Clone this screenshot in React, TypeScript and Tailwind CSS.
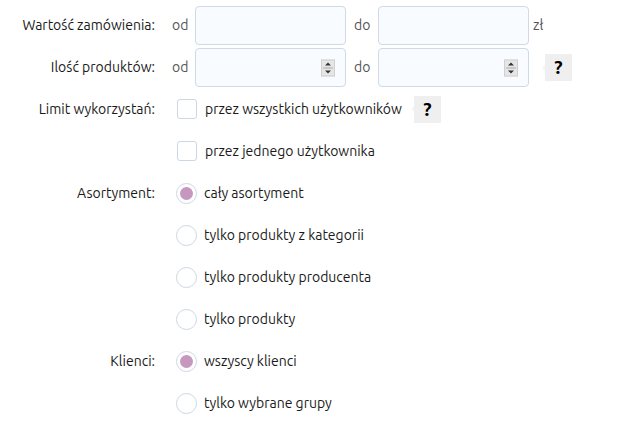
import React from "react";

const font = { fontFamily: "Ubuntu, 'Noto Sans', 'Open Sans', sans-serif" };

function Spinner() {
  return (
    <div className="absolute right-[10px] top-1/2 -translate-y-1/2 w-[14px] h-[17px] bg-[#e6e6e6] border border-[#cfcfcf] flex flex-col items-center justify-center gap-[1px]">
      <svg width="8" height="5" viewBox="0 0 8 5"><path d="M4 1 L7 4 L1 4 Z" fill="#333" /></svg>
      <div className="w-[10px] h-px bg-[#aaa]" />
      <svg width="8" height="5" viewBox="0 0 8 5"><path d="M1 1 L7 1 L4 4 Z" fill="#333" /></svg>
    </div>
  );
}

function Input({ spinner }: { spinner?: boolean }) {
  return (
    <div className="relative w-[151px] h-[39px] rounded-[4px] border border-[#cfdae6] bg-[#f8fbff] shrink-0">
      {spinner && <Spinner />}
    </div>
  );
}

function Help() {
  return (
    <div className="relative w-[27px] h-[27px] bg-[#efefef] flex items-center justify-center text-[19px] font-bold text-black leading-none">
      <span className="absolute left-[-3px] top-1/2 -translate-y-1/2 w-0 h-0 border-y-[3px] border-y-transparent border-r-[3px] border-r-[#f5f5f5]" />
      ?
    </div>
  );
}

function Label({ children }: { children?: React.ReactNode }) {
  return <div className="w-[155px] shrink-0 text-right text-[#1a1a1a]">{children}</div>;
}

function Checkbox() {
  return <div className="w-[20px] h-[20px] rounded-[3px] border border-[#cdd7e3] bg-white shrink-0" />;
}

function Radio({ checked }: { checked?: boolean }) {
  return (
    <div className="w-[21px] h-[21px] rounded-full border border-[#cdd7e3] bg-white shrink-0 flex items-center justify-center">
      {checked && <div className="w-[13px] h-[13px] rounded-full bg-[#c697bf]" />}
    </div>
  );
}

export default function App() {
  const radios1 = [
    "cały asortyment",
    "tylko produkty z kategorii",
    "tylko produkty producenta",
    "tylko produkty",
  ];
  const radios2 = ["wszyscy klienci", "tylko wybrane grupy"];
  return (
    <div className="w-[617px] h-[440px] bg-white text-[14px] pt-[6px]" style={font}>
      <div className="flex items-center h-[39px]">
        <Label>Wartość zamówienia:</Label>
        <span className="ml-[17px] w-[23px] text-[#555]">od</span>
        <Input />
        <span className="ml-[8px] w-[24px] text-[#555]">do</span>
        <Input />
        <span className="ml-[4px] text-[#555]">zł</span>
      </div>
      <div className="flex items-center h-[39px] mt-[3px]">
        <Label>Ilość produktów:</Label>
        <span className="ml-[17px] w-[23px] text-[#555]">od</span>
        <Input spinner />
        <span className="ml-[8px] w-[24px] text-[#555]">do</span>
        <Input spinner />
        <div className="ml-[16px]"><Help /></div>
      </div>
      <div className="flex items-center h-[42px] mt-[1px]">
        <Label>Limit wykorzystań:</Label>
        <div className="ml-[22px]"><Checkbox /></div>
        <span className="ml-[8px] text-[#1a1a1a]">przez wszystkich użytkowników</span>
        <div className="ml-[12px]"><Help /></div>
      </div>
      <div className="flex items-center h-[42px]">
        <Label />
        <div className="ml-[22px]"><Checkbox /></div>
        <span className="ml-[8px] text-[#1a1a1a]">przez jednego użytkownika</span>
      </div>
      {radios1.map((r, i) => (
        <div key={r} className="flex items-center h-[42px]">
          <Label>{i === 0 ? "Asortyment:" : ""}</Label>
          <div className="ml-[21px]"><Radio checked={i === 0} /></div>
          <span className="ml-[7px] text-[#1a1a1a]">{r}</span>
        </div>
      ))}
      {radios2.map((r, i) => (
        <div key={r} className="flex items-center h-[42px]">
          <Label>{i === 0 ? "Klienci:" : ""}</Label>
          <div className="ml-[21px]"><Radio checked={i === 0} /></div>
          <span className="ml-[7px] text-[#1a1a1a]">{r}</span>
        </div>
      ))}
    </div>
  );
}
